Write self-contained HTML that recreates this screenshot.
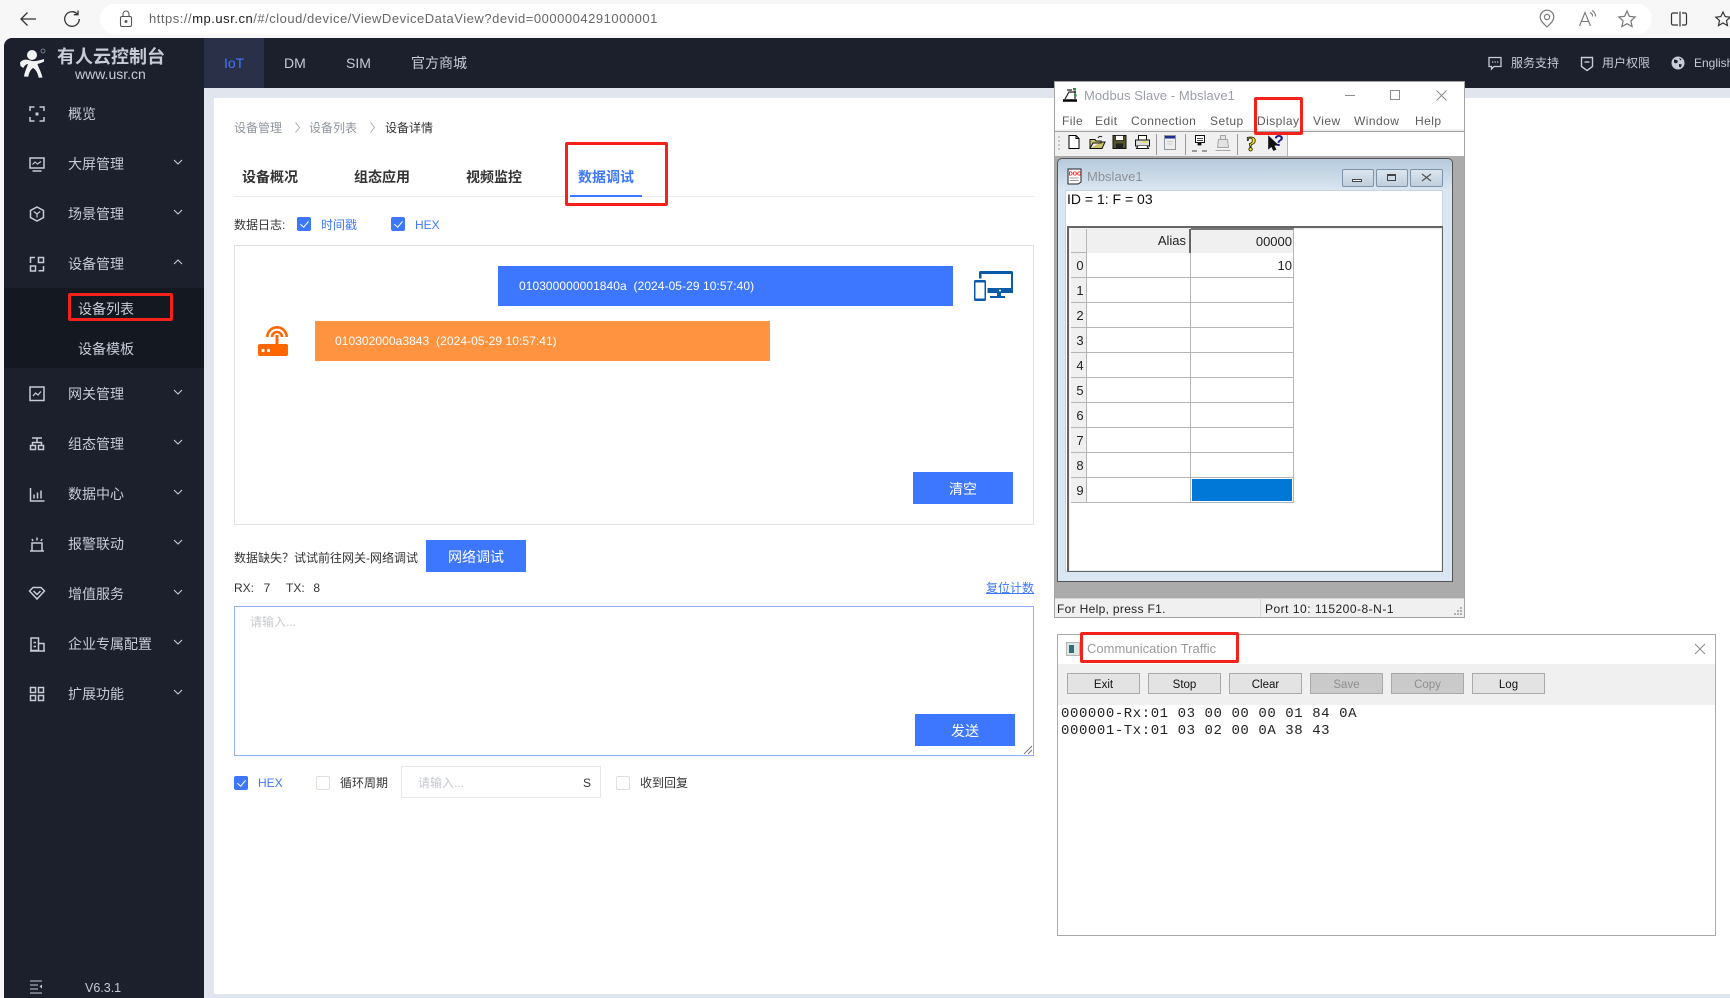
<!DOCTYPE html>
<html><head><meta charset="utf-8"><title>Device Data</title>
<style>
html,body{margin:0;padding:0}
body{position:relative;width:1730px;height:998px;overflow:hidden;background:#f7f7f7;font-family:"Liberation Sans","Noto Sans CJK SC",sans-serif;font-size:12px;color:#333}
.a,.t,svg{position:absolute}
.t{white-space:nowrap;line-height:20px;height:20px}
.nav{color:#c6cbd6;font-size:14px}
.sb{color:#c6cbd6;font-size:14px;left:68px}
.cb{position:absolute;width:14px;height:14px;border-radius:2px;background:#3e77ff}
.cb:after{content:"";position:absolute;left:4.5px;top:2px;width:3.5px;height:7px;border:solid #fff;border-width:0 1.2px 1.2px 0;transform:rotate(40deg)}
.ce{position:absolute;width:12px;height:12px;border:1px solid #dcdfe6;border-radius:2px;background:#fff}
.btn{position:absolute;background:#3e77ff;color:#fff;font-size:14px;text-align:center;width:100px;height:32px;line-height:34px}
.red{position:absolute;border:3px solid #f5211b;border-radius:2px;box-sizing:border-box}
.m{color:#5b5b5b;font-size:12px;letter-spacing:.45px;top:111px}
.cell{position:absolute;box-sizing:border-box;border-right:1px solid #b5b5b5;border-bottom:1px solid #b5b5b5;height:25px;font-size:13px;color:#222;line-height:26px;text-align:right;padding-right:1px}
.hd{background:#f0f0f0;text-align:center;padding:0 0 0 3px}
.tb{position:absolute;top:673px;width:73px;height:21px;box-sizing:border-box;border:1px solid #a9a9a9;background:#e3e3e3;color:#111;font-size:11.5px;line-height:22px;text-align:center}
.tb.d{background:#cacaca;color:#8e8e8e}
.lg{position:absolute;left:1061px;font-family:"Liberation Mono",monospace;font-size:14px;letter-spacing:.57px;color:#222;white-space:pre;line-height:17px}
</style></head><body>

<!-- browser chrome -->
<svg style="left:18px;top:9px" width="20" height="20" viewBox="0 0 20 20" fill="none" stroke="#333" stroke-width="1.3"><path d="M18 10H3M9.5 3.5L3 10l6.5 6.5"/></svg>
<svg style="left:62px;top:9px" width="20" height="20" viewBox="0 0 20 20" fill="none" stroke="#333" stroke-width="1.3"><path d="M15.5 5.2A7.3 7.3 0 1 0 17.3 10"/><path d="M16 1.5v4.2h-4.2"/></svg>
<div class="a" style="left:100px;top:4px;width:1552px;height:30px;background:#fff;border-radius:15px"></div>
<svg style="left:119px;top:10px" width="14" height="18" viewBox="0 0 14 18" fill="none" stroke="#555" stroke-width="1.1"><rect x="1.5" y="6.5" width="11" height="10" rx="1.5"/><path d="M4 6.5V4a3 3 0 0 1 6 0v2.5"/><circle cx="7" cy="11.5" r=".9" fill="#555"/></svg>
<div class="t" style="left:149px;top:9px;font-size:13px;color:#666;letter-spacing:.52px">https://<span style="color:#1a1a1a">mp.usr.cn</span>/#/cloud/device/ViewDeviceDataView?devid=0000004291000001</div>
<svg style="left:1538px;top:9px" width="18" height="20" viewBox="0 0 18 20" fill="none" stroke="#777" stroke-width="1.2"><path d="M9 18C5 14 2.2 11.5 2.2 8a6.8 6.8 0 0 1 13.6 0c0 3.500-2.800 6-6.800 10z"/><circle cx="9" cy="8" r="2.600"/></svg>
<svg style="left:1578px;top:9px" width="20" height="20" viewBox="0 0 20 20" fill="none" stroke="#777" stroke-width="1.1"><path d="M1.500 17L7 3.500 12.500 17M3.500 12.500h7"/><path d="M12 3.500a4 4 0 0 1 2.500 4M14 1.500a6.500 6.500 0 0 1 3.500 6"/></svg>
<svg style="left:1617px;top:9px" width="20" height="20" viewBox="0 0 20 20" fill="none" stroke="#777" stroke-width="1.2"><path d="M10 2l2.400 5.300 5.800.7-4.300 3.900 1.200 5.700L10 14.700l-5.100 2.900 1.200-5.700L1.800 8l5.800-.7z"/></svg>
<svg style="left:1670px;top:10px" width="18" height="18" viewBox="0 0 18 18" fill="none" stroke="#333" stroke-width="1.200"><path d="M8 3H3a1.500 1.500 0 0 0-1.500 1.500v9A1.500 1.500 0 0 0 3 15h5M10 1.500v15M12 3h3a1.500 1.500 0 0 1 1.500 1.500v9A1.500 1.500 0 0 1 15 15h-3"/></svg>
<svg style="left:1716px;top:9px" width="14" height="20" viewBox="0 0 14 20" fill="none" stroke="#333" stroke-width="1.200" overflow="visible"><path d="M7 3l2.200 4.600 5 .6-3.700 3.400 1 5L7 14l-4.500 2.600 1-5L-.2 8.200l5-.6z"/></svg>

<!-- app -->
<div class="a" style="left:4px;top:38px;width:1726px;height:960px;background:#e1e5ee;border-top-left-radius:8px;overflow:hidden">
  <div class="a" style="left:0;top:0;width:200px;height:960px;background:#1b202c"></div>
  <div class="a" style="left:200px;top:0;width:1526px;height:50px;background:#1b202c"></div>
  <div class="a" style="left:200px;top:0;width:60px;height:50px;background:#2a3048"></div>
  <div class="a" style="left:0;top:250px;width:200px;height:80px;background:#141821"></div>
  <div class="a" style="left:210px;top:60px;width:1516px;height:896px;background:#fff"></div>
</div>

<!-- logo -->
<svg style="left:19px;top:47px" width="30" height="31" viewBox="0 0 30 31">
  <circle cx="13" cy="8" r="5" fill="#f2f3f5"/>
  <path d="M1 15.500C5 11 9 13 13 14c3 .6 7-.5 12-2v2.600c-3 1.400-5 2-6.500 2.400.8 3.400 3.200 6.400 5 13.500l-3.700.3C18.500 25.500 16.500 22 14 21c-2 1-4 4.500-4.800 8.800L5 29.500c.5-4 2.600-8.500 4-12.500-1.500 0-3 1-4.800 4L1.500 19z" fill="#f2f3f5"/>
  <circle cx="24" cy="4" r="2" fill="none" stroke="#8b8f98" stroke-width=".8"/>
</svg>
<div class="t" style="left:57px;top:47px;font-size:18px;font-weight:700;color:#c6cbd6">有人云控制台</div>
<div class="t" style="left:75px;top:64px;font-size:14px;color:#c6cbd6">www.usr.cn</div>

<!-- top nav -->
<div class="t nav" style="left:224px;top:53px;color:#3e77ff">IoT</div>
<div class="t nav" style="left:284px;top:53px">DM</div>
<div class="t nav" style="left:346px;top:53px">SIM</div>
<div class="t nav" style="left:411px;top:53px">官方商城</div>
<svg style="left:1488px;top:56px" width="14" height="15" viewBox="0 0 14 15" fill="none" stroke="#c6cbd6" stroke-width="1.300"><path d="M1 1.500h12v9H6l-2.500 2.500v-2.500H1z"/><path d="M4 6h1.300M6.500 6h1.300M9 6h1.300"/></svg>
<div class="t" style="left:1511px;top:53px;color:#c6cbd6">服务支持</div>
<svg style="left:1580px;top:56px" width="14" height="16" viewBox="0 0 14 16" fill="none" stroke="#c6cbd6" stroke-width="1.400"><path d="M1.500 1.500h11v9L7 14.500 1.500 10.500z"/><path d="M4.500 6h5"/></svg>
<div class="t" style="left:1602px;top:53px;color:#c6cbd6">用户权限</div>
<svg style="left:1671px;top:56px" width="14" height="14" viewBox="0 0 14 14"><circle cx="7" cy="7" r="6.500" fill="#c6cbd6"/><path d="M3 3.500l3 .5 1 2-2 1.500-2-1zM8 8l3 .5-1.500 3-1.500-1z M8 2l2.500 1-1 1.500z" fill="#1b202c"/></svg>
<div class="t" style="left:1694px;top:53px;color:#c6cbd6">English</div>

<!-- sidebar -->
<div class="t sb" style="top:104px">概览</div>
<div class="t sb" style="top:154px">大屏管理</div>
<div class="t sb" style="top:204px">场景管理</div>
<div class="t sb" style="top:254px">设备管理</div>
<div class="t sb" style="left:78px;top:299px">设备列表</div>
<div class="t sb" style="left:78px;top:339px">设备模板</div>
<div class="t sb" style="top:384px">网关管理</div>
<div class="t sb" style="top:434px">组态管理</div>
<div class="t sb" style="top:484px">数据中心</div>
<div class="t sb" style="top:534px">报警联动</div>
<div class="t sb" style="top:584px">增值服务</div>
<div class="t sb" style="top:634px">企业专属配置</div>
<div class="t sb" style="top:684px">扩展功能</div>
<div class="red" style="left:68px;top:293px;width:105px;height:28px"></div>

<svg class="ic" style="left:0;top:0;overflow:visible" width="1" height="1" fill="none" stroke="#c6cbd6" stroke-width="1.500">
  <path d="M30 111v-4h4.500M39.500 107H44v4M44 117v4h-4.500M34.500 121H30v-4"/><rect x="35.500" y="112.500" width="3" height="3" fill="#c6cbd6" stroke="none"/>
  <rect x="30" y="158" width="14" height="10"/><path d="M32.500 171h9"/><path d="M32.500 164.500l2.500-2.500 2.500 2 3.500-2.500" stroke-width="1.100"/>
  <path d="M37 207l6.500 3.500v7L37 221l-6.500-3.500v-7z"/><path d="M33.800 211.500L37 214l3.200-2.500M37 214v3.500" stroke-width="1.200"/>
  <path d="M30.500 263v-5.500h4.500"/><rect x="38.500" y="257.500" width="5" height="5"/><rect x="30.500" y="266" width="5" height="5"/><path d="M38.500 270.800h5V266"/>
  <rect x="30" y="387" width="14" height="13.500"/><path d="M33 396l2.500-3 2.500 2 3-3.500" stroke-width="1.300"/>
  <path d="M32 438h10M37 438v4M32.500 445v-2.500h9v2.500"/><rect x="30.500" y="445.500" width="5" height="4"/><rect x="38.500" y="445.500" width="5" height="4"/>
  <path d="M30.500 488v13h14M34 498.500v-4M37.500 498.500v-6M41 498.500v-8"/>
  <path d="M30 551h14M32 551v-8h10v8M32 539l1 2M37 537.500v3M42 539l-1 2"/>
  <path d="M33 587.500h8l3.500 3.500-7.500 8-7.500-8z"/><path d="M33.500 591l3.500 3.500 3.500-3.500"/>
  <path d="M30 651h15"/><rect x="31" y="638" width="7.500" height="12.500"/><path d="M38.500 643.500H44v7M33.500 642.500h2.500M33.500 646.500h2.500"/>
  <rect x="30.500" y="687.500" width="5" height="5"/><rect x="38.500" y="687.500" width="5" height="5"/><rect x="30.500" y="695.500" width="5" height="5"/><rect x="38.500" y="695.500" width="5" height="5"/>
  <path d="M30 981h12M30 985h8M30 989h8M30 993h12" stroke-width="1"/><path d="M42 984.500v4l-2.500-2z" fill="#c6cbd6" stroke="none"/>
  <g stroke-width="1.100" stroke="#c6cbd6">
    <path d="M174 160l4 4 4-4M174 210l4 4 4-4M174 264l4-4 4 4M174 390l4 4 4-4M174 440l4 4 4-4M174 490l4 4 4-4M174 540l4 4 4-4M174 590l4 4 4-4M174 640l4 4 4-4M174 690l4 4 4-4"/>
  </g>
</svg>
<div class="t" style="left:85px;top:978px;color:#c6cbd6;font-size:12.500px">V6.3.1</div>

<!-- breadcrumb -->
<div class="t" style="left:234px;top:118px;color:#8f949e">设备管理</div>
<div class="t" style="left:309px;top:118px;color:#8f949e">设备列表</div>
<div class="t" style="left:385px;top:118px;color:#333">设备详情</div>
<svg style="left:0;top:0;overflow:visible" width="1" height="1" fill="none" stroke="#a9adb5"><path d="M295.500 122.500l4 5-4 5M370.500 122.500l4 5-4 5"/></svg>

<!-- tabs -->
<div class="a" style="left:234px;top:196px;width:800px;height:1px;background:#e8eaf0"></div>
<div class="t" style="left:242px;top:167px;font-size:14px;font-weight:700;color:#333">设备概况</div>
<div class="t" style="left:354px;top:167px;font-size:14px;font-weight:700;color:#333">组态应用</div>
<div class="t" style="left:466px;top:167px;font-size:14px;font-weight:700;color:#333">视频监控</div>
<div class="t" style="left:578px;top:167px;font-size:14px;font-weight:700;color:#3e77ff">数据调试</div>
<div class="a" style="left:570px;top:195px;width:72px;height:2px;background:#3e77ff"></div>
<div class="red" style="left:565px;top:142px;width:103px;height:64px"></div>

<div class="t" style="left:234px;top:215px">数据日志:</div>
<div class="cb" style="left:297px;top:217px"></div>
<div class="t" style="left:321px;top:215px;color:#3e77ff">时间戳</div>
<div class="cb" style="left:391px;top:217px"></div>
<div class="t" style="left:415px;top:215px;color:#3e77ff">HEX</div>

<!-- log box -->
<div class="a" style="left:234px;top:245px;width:798px;height:278px;border:1px solid #dfe1e8;background:#fff"></div>
<div class="a" style="left:498px;top:266px;width:455px;height:40px;background:#3e77ff"></div>
<div class="t" style="left:519px;top:276px;color:#fff;white-space:pre;letter-spacing:.06px">010300000001840a  (2024-05-29 10:57:40)</div>
<svg style="left:973px;top:270px" width="41" height="32" viewBox="0 0 41 32">
  <path d="M6 2.500a1.500 1.500 0 0 1 1.500-1.500h31A1.500 1.500 0 0 1 40 2.500v20.500H14.500v-5H38V4H8.500v4.500H6z" fill="#0b5aa8"/>
  <circle cx="27" cy="20.500" r="1" fill="#fff"/>
  <path d="M24 23h4v3h4v2H17v-2h7z" fill="#0b5aa8"/>
  <path d="M2.500 10h9A1.500 1.500 0 0 1 13 11.500v18a1.500 1.500 0 0 1-1.500 1.500h-9A1.500 1.500 0 0 1 1 29.500v-18A1.500 1.500 0 0 1 2.500 10zM2.500 12.500v16h9v-16z" fill="#0b5aa8" fill-rule="evenodd"/>
</svg>
<svg style="left:258px;top:325px" width="32" height="32" viewBox="0 0 32 32" fill="none">
  <rect x="0" y="19" width="30" height="12" rx="2" fill="#ff6600"/>
  <rect x="17.500" y="10" width="3" height="10" fill="#ff6600"/>
  <path d="M14 12a5 5 0 1 1 10 0M9.300 12a9.700 9.700 0 1 1 19.400 0" stroke="#ff6600" stroke-width="2.600"/>
  <circle cx="5" cy="25.500" r="1.600" fill="#fff"/><circle cx="10.500" cy="25.500" r="1.600" fill="#fff"/>
</svg>
<div class="a" style="left:315px;top:321px;width:455px;height:40px;background:#ff9340"></div>
<div class="t" style="left:335px;top:331px;color:#fff;white-space:pre;letter-spacing:.06px">010302000a3843  (2024-05-29 10:57:41)</div>
<div class="btn" style="left:913px;top:472px">清空</div>

<div class="t" style="left:234px;top:548px">数据缺失？试试前往网关-网络调试</div>
<div class="btn" style="left:426px;top:540px">网络调试</div>
<div class="t" style="left:234px;top:578px">RX:&nbsp; <span style="margin-left:3px">7</span></div>
<div class="t" style="left:286px;top:578px">TX:&nbsp; <span style="margin-left:2px">8</span></div>
<div class="t" style="left:986px;top:578px;color:#3e77ff;text-decoration:underline">复位计数</div>

<!-- textarea -->
<div class="a" style="left:234px;top:606px;width:798px;height:148px;border:1px solid #8fb0f5;background:#fff"></div>
<div class="t" style="left:250px;top:612px;color:#c5c8ce">请输入...</div>
<div class="btn" style="left:915px;top:714px">发送</div>
<svg style="left:1023px;top:745px" width="10" height="10" fill="none" stroke="#777" stroke-width=".9"><path d="M1 9l8-8M5 9l4-4"/></svg>

<!-- bottom options -->
<div class="cb" style="left:234px;top:776px"></div>
<div class="t" style="left:258px;top:773px;color:#3e77ff">HEX</div>
<div class="ce" style="left:316px;top:776px"></div>
<div class="t" style="left:340px;top:773px">循环周期</div>
<div class="a" style="left:401px;top:766px;width:198px;height:30px;border:1px solid #e6e8ee;background:#fff"></div>
<div class="t" style="left:418px;top:773px;color:#c5c8ce">请输入...</div>
<div class="t" style="left:583px;top:773px">S</div>
<div class="ce" style="left:616px;top:776px"></div>
<div class="t" style="left:640px;top:773px">收到回复</div>

<!-- Modbus Slave window -->
<div class="a" style="left:1054px;top:81px;width:409px;height:535px;border:1px solid #a3a3a3;background:#fff"></div>
<svg style="left:1063px;top:87px" width="15" height="15" viewBox="0 0 15 15"><path d="M0 13.500h14" stroke="#000" stroke-width="2.500"/><path d="M2 12L6 5h7M4 3h5M12 4v8" stroke="#222" fill="none" stroke-width="1.200"/><rect x="10" y="1" width="3" height="2.500" fill="#383"/><rect x="11" y="7" width="2.500" height="2.500" fill="#383"/></svg>
<div class="t" style="left:1084px;top:86px;font-size:13px;color:#9a9ea6;letter-spacing:.06px">Modbus Slave - Mbslave1</div>
<svg style="left:0;top:0;overflow:visible" width="1" height="1" fill="none" stroke="#8c8c8c"><path d="M1345 95.500h10M1436.500 90.500l10 10M1446.500 90.500l-10 10"/><rect x="1390.500" y="90.500" width="9" height="9"/></svg>
<div class="t m" style="left:1062px">File</div><div class="t m" style="left:1095px">Edit</div><div class="t m" style="left:1131px">Connection</div><div class="t m" style="left:1210px">Setup</div><div class="t m" style="left:1257px">Display</div><div class="t m" style="left:1313px">View</div><div class="t m" style="left:1354px">Window</div><div class="t m" style="left:1415px">Help</div>
<div class="a" style="left:1055px;top:129px;width:409px;height:2px;background:#f0f0f0;border-bottom:1px solid #a0a0a0"></div>
<div class="a" style="left:1055px;top:132px;width:232px;height:24px;background:#f0f0f0"></div>
<div class="a" style="left:1287px;top:132px;width:1px;height:24px;background:#b5b5b5"></div>
<svg style="left:1057px;top:133px" width="232" height="23" viewBox="1057 133 232 23">
  <path d="M1058 137h2M1058 141h2M1058 145h2M1058 149h2" stroke="#bbb" stroke-width="1.500"/>
  <path d="M1069 135.500h7l3 3v10h-10z" fill="#fff" stroke="#000"/><path d="M1076 135.500v3h3" fill="none" stroke="#000"/>
  <path d="M1090 148.500v-9h5l1 1.500h5v2h-8l-3 5.500h12l3-6.500h-4" fill="#c9c267" stroke="#111"/><path d="M1098 138c1-2 3-2 4-1" stroke="#111" fill="none"/>
  <rect x="1113" y="135.500" width="13" height="13" fill="#555528" stroke="#111"/><rect x="1115.500" y="135.500" width="8" height="5" fill="#fff" stroke="#111" stroke-width=".7"/><rect x="1116" y="143.500" width="7" height="5" fill="#222"/>
  <g transform="translate(2,0)"><path d="M1136.500 140v-4.500h8v4.500" fill="#fff" stroke="#111"/><path d="M1133.500 140h14v6h-14z" fill="#ddd" stroke="#111"/><path d="M1136 146l-1.500 2.500h12l-1.500-2.500" fill="#fff" stroke="#111"/><path d="M1140 142h5" stroke="#dd0"/></g>
  <path d="M1156.500 134v21M1185.500 134v21M1237.500 134v21" stroke="#9a9a9a"/>
  <rect x="1164.500" y="135.500" width="11" height="14" fill="#eee" stroke="#8c96a0"/><rect x="1165" y="136" width="10" height="2.500" fill="#1d2e8a"/><path d="M1167 141.500h6M1167 144h6" stroke="#ccc"/>
  <rect x="1195.500" y="135.500" width="9" height="7" fill="#fff" stroke="#111"/><path d="M1197 138.500h6M1197 140.500h6" stroke="#111" stroke-width=".7"/><path d="M1198 143h3v2h-3zM1192 151h5M1202 151h5" fill="#111" stroke="#111" stroke-width=".8"/>
  <g stroke="#a5a5a5" fill="#e2e2e2" transform="translate(2,0)"><rect x="1218.500" y="135.500" width="5" height="4"/><path d="M1216.500 139.500h9l1 8h-11z"/><path d="M1213.500 150.500h15"/></g>
  <text x="1246" y="151" font-family="Liberation Serif,serif" font-size="21" font-weight="700" fill="#ffe800" stroke="#111" stroke-width=".8">?</text>
  <path d="M1268.500 136l0 13 3-2.500 2 4 2.500-1-2-4 4-.5z" fill="#111" stroke="#111" stroke-width=".6"/>
  <text x="1274" y="146" font-family="Liberation Sans,sans-serif" font-size="16" font-weight="700" fill="#1b1b8f">?</text>
</svg>
<div class="a" style="left:1055px;top:156px;width:409px;height:442px;background:#ababab"></div>
<!-- child -->
<div class="a" style="left:1057px;top:158px;width:394px;height:422px;border:1px solid #555;border-radius:5px 5px 0 0;background:linear-gradient(#b5c9dc,#dae6f1 31px);overflow:hidden"></div>
<svg style="left:1067px;top:168px" width="15" height="17" viewBox="0 0 15 17"><path d="M1 1h13v13l-3 2H1z" fill="#fff" stroke="#222"/><text x="1.800" y="7.500" font-family="Liberation Sans,sans-serif" font-size="5.500" font-weight="700" fill="#e00">DOC</text><path d="M2.500 10h9M2.500 12.500h9" stroke="#999"/></svg>
<div class="t" style="left:1087px;top:167px;font-size:13px;color:#8c9198">Mbslave1</div>
<div class="a" style="left:1342px;top:169px;width:30px;height:16px;border:1px solid #7e93a8;border-radius:2px;background:linear-gradient(#dbe5ef,#c0cfdd)"><div class="a" style="left:9px;top:9px;width:10px;height:3px;border:1px solid #444;box-sizing:border-box;background:#fff"></div></div>
<div class="a" style="left:1376px;top:169px;width:30px;height:16px;border:1px solid #7e93a8;border-radius:2px;background:linear-gradient(#dbe5ef,#c0cfdd)"><div class="a" style="left:10px;top:4px;width:9px;height:7px;border:1px solid #444;box-sizing:border-box;border-top-width:2px"></div></div>
<div class="a" style="left:1410px;top:169px;width:31px;height:16px;border:1px solid #7e93a8;border-radius:2px;background:linear-gradient(#dbe5ef,#c0cfdd)"><svg style="left:10px;top:3px" width="11" height="9"><path d="M1 1l9 7M10 1l-9 7" stroke="#555" stroke-width="1.300"/></svg></div>
<div class="a" style="left:1066px;top:191px;width:376px;height:380px;background:#fff;box-shadow:0 0 0 1px #c7d3de"></div>
<div class="t" style="left:1067px;top:189px;font-size:14px;color:#111">ID = 1: F = 03</div>
<div class="a" style="left:1067px;top:226px;width:373px;height:343px;border:2px solid #666;border-right:1px solid #666;border-bottom:1px solid #666;box-sizing:content-box;background:#fff;box-shadow:inset 0 0 0 1px #eee"></div>
<div id="grid">
<div class="cell hd" style="left:1071px;top:229px;width:16px;height:24px"></div>
<div class="cell" style="left:1087px;top:229px;width:104px;height:24px;background:#f0f0f0;border-right:2px solid #666;border-bottom:0;text-align:right;padding-right:3px;line-height:24px">Alias</div>
<div class="cell" style="left:1191px;top:228px;width:103px;height:25px;background:#f0f0f0;border-top:2px solid #777;border-bottom:0;line-height:24px">00000</div>
<div class="cell hd" style="left:1071px;top:253px;width:16px">0</div><div class="cell" style="left:1087px;top:253px;width:104px"></div><div class="cell" style="left:1191px;top:253px;width:103px">10</div>
<div class="cell hd" style="left:1071px;top:278px;width:16px">1</div><div class="cell" style="left:1087px;top:278px;width:104px"></div><div class="cell" style="left:1191px;top:278px;width:103px"></div>
<div class="cell hd" style="left:1071px;top:303px;width:16px">2</div><div class="cell" style="left:1087px;top:303px;width:104px"></div><div class="cell" style="left:1191px;top:303px;width:103px"></div>
<div class="cell hd" style="left:1071px;top:328px;width:16px">3</div><div class="cell" style="left:1087px;top:328px;width:104px"></div><div class="cell" style="left:1191px;top:328px;width:103px"></div>
<div class="cell hd" style="left:1071px;top:353px;width:16px">4</div><div class="cell" style="left:1087px;top:353px;width:104px"></div><div class="cell" style="left:1191px;top:353px;width:103px"></div>
<div class="cell hd" style="left:1071px;top:378px;width:16px">5</div><div class="cell" style="left:1087px;top:378px;width:104px"></div><div class="cell" style="left:1191px;top:378px;width:103px"></div>
<div class="cell hd" style="left:1071px;top:403px;width:16px">6</div><div class="cell" style="left:1087px;top:403px;width:104px"></div><div class="cell" style="left:1191px;top:403px;width:103px"></div>
<div class="cell hd" style="left:1071px;top:428px;width:16px">7</div><div class="cell" style="left:1087px;top:428px;width:104px"></div><div class="cell" style="left:1191px;top:428px;width:103px"></div>
<div class="cell hd" style="left:1071px;top:453px;width:16px">8</div><div class="cell" style="left:1087px;top:453px;width:104px"></div><div class="cell" style="left:1191px;top:453px;width:103px"></div>
<div class="cell hd" style="left:1071px;top:478px;width:16px">9</div><div class="cell" style="left:1087px;top:478px;width:104px"></div><div class="cell" style="left:1191px;top:478px;width:103px;background:#0078d7;box-shadow:inset 0 0 0 1px #fff"></div>
</div>
<!-- status -->
<div class="a" style="left:1055px;top:598px;width:409px;height:19px;background:#f0f0f0;border-top:1px solid #d5d5d5;box-sizing:border-box"></div>
<div class="a" style="left:1260px;top:599px;width:1px;height:18px;background:#d8d8d8"></div>
<div class="t" style="left:1057px;top:599px;font-size:12px;color:#222;letter-spacing:.32px">For Help, press F1.</div>
<div class="t" style="left:1265px;top:599px;font-size:12px;color:#222;letter-spacing:.5px">Port 10: 115200-8-N-1</div>
<svg style="left:1454px;top:607px" width="9" height="9" fill="#b0b0b0"><rect x="6" y="0" width="2" height="2"/><rect x="3" y="3" width="2" height="2"/><rect x="6" y="3" width="2" height="2"/><rect x="0" y="6" width="2" height="2"/><rect x="3" y="6" width="2" height="2"/><rect x="6" y="6" width="2" height="2"/></svg>
<div class="red" style="left:1254px;top:97px;width:49px;height:38px"></div>

<!-- Communication Traffic -->
<div class="a" style="left:1057px;top:634px;width:657px;height:300px;border:1px solid #aaa;background:#fff"></div>
<svg style="left:1066px;top:642px" width="14" height="14"><rect x=".5" y=".5" width="13" height="13" fill="#dfe6e6" stroke="#b5b5b5"/><rect x="3" y="3" width="5" height="8" fill="#2c6f7a"/></svg>
<div class="t" style="left:1087px;top:639px;font-size:13px;color:#9a9a9a">Communication Traffic</div>
<svg style="left:1694px;top:643px" width="12" height="12" fill="none" stroke="#8c8c8c"><path d="M1 1l10 10M11 1L1 11"/></svg>
<div class="a" style="left:1058px;top:664px;width:657px;height:41px;background:#f0f0f0"></div>
<div class="tb" style="left:1067px">Exit</div><div class="tb" style="left:1148px">Stop</div><div class="tb" style="left:1229px">Clear</div><div class="tb d" style="left:1310px">Save</div><div class="tb d" style="left:1391px">Copy</div><div class="tb" style="left:1472px">Log</div>
<div class="lg" style="top:706px">000000-Rx:01 03 00 00 00 01 84 0A</div>
<div class="lg" style="top:723px">000001-Tx:01 03 02 00 0A 38 43</div>
<div class="red" style="left:1080px;top:632px;width:159px;height:31px"></div>

</body></html>
